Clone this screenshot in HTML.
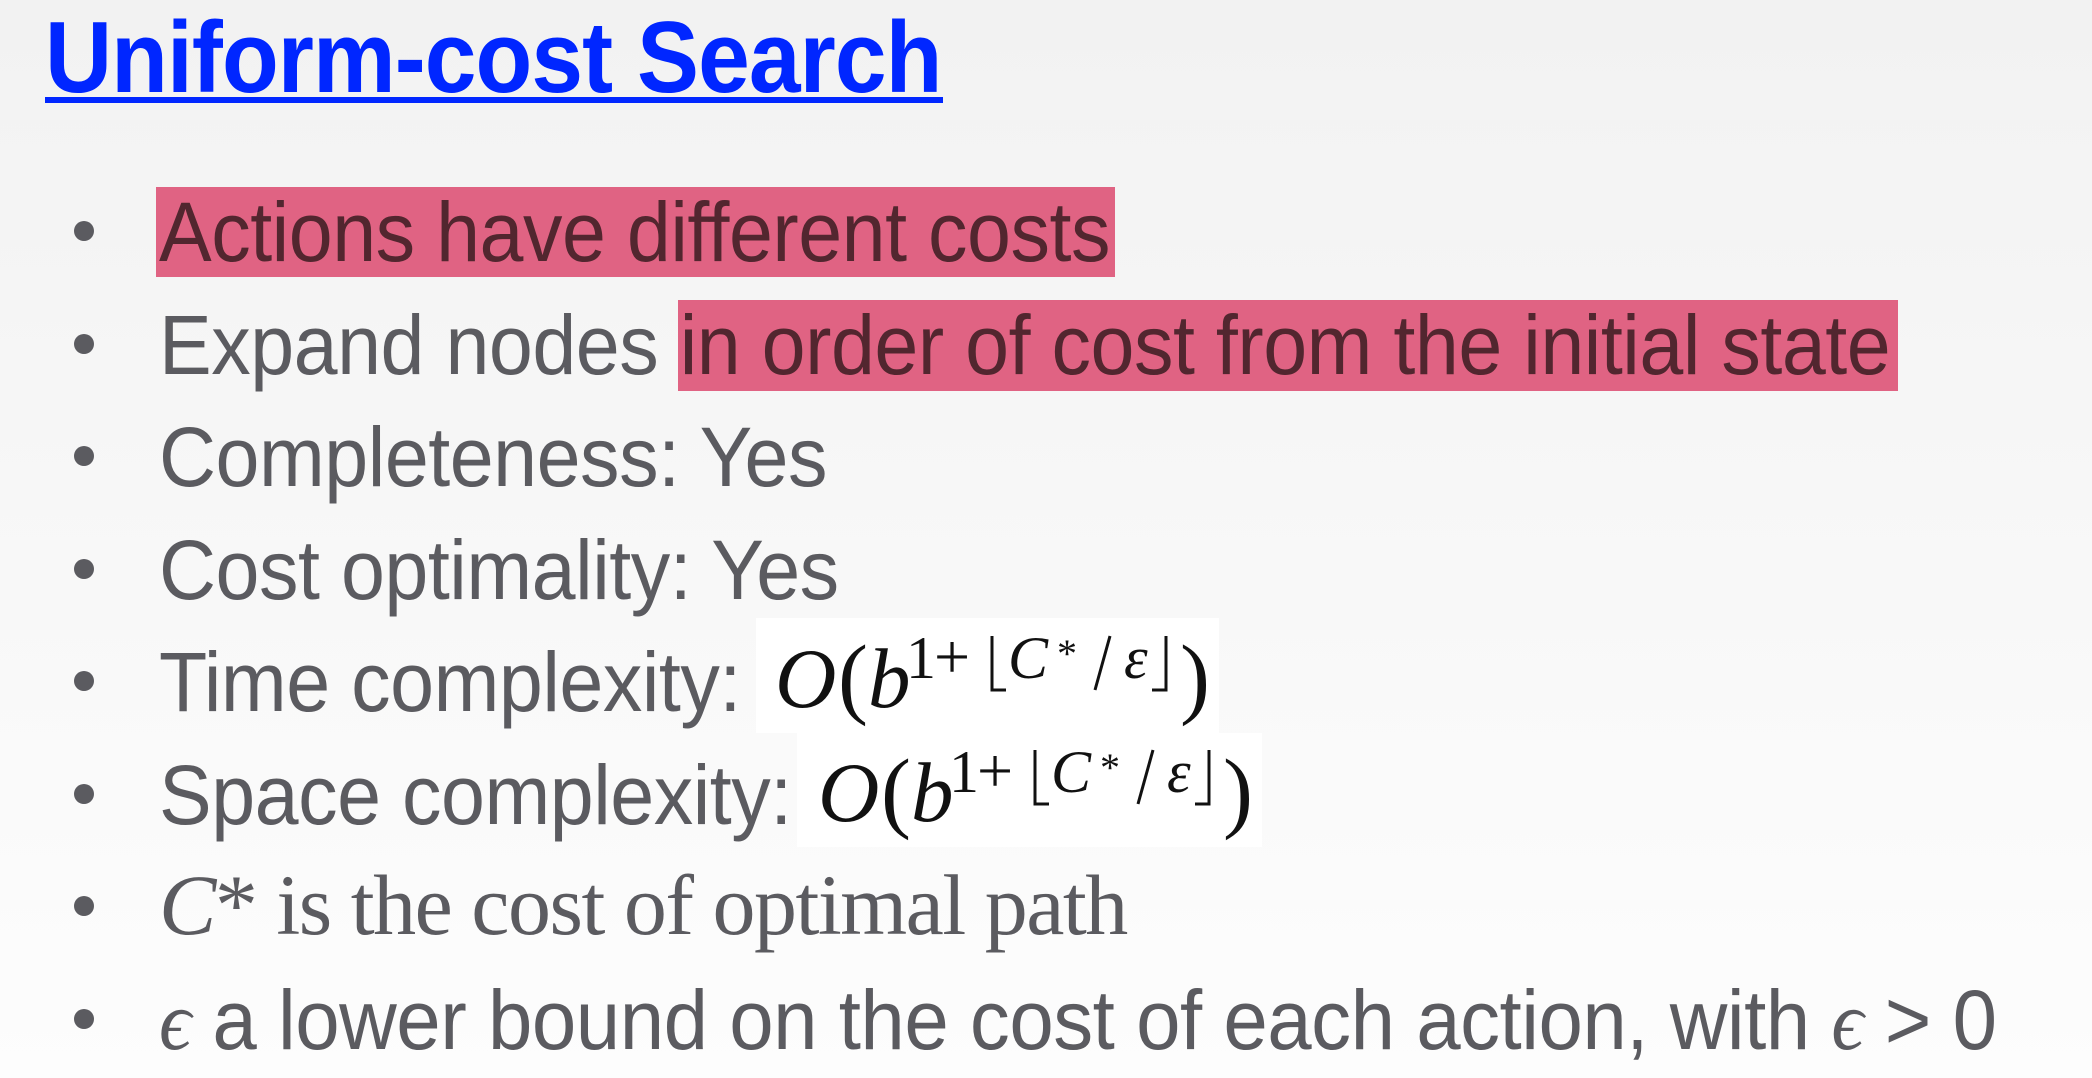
<!DOCTYPE html>
<html><head><meta charset="utf-8"><style>
html,body{margin:0;padding:0}
body{width:2092px;height:1078px;overflow:hidden;position:relative;background:linear-gradient(#f2f2f2,#fdfdfd);font-family:"Liberation Sans",Arial,sans-serif;color:#5b5b60}
.a{position:absolute;white-space:nowrap;line-height:1;transform-origin:0 0}
.t{left:45px;top:8px;font-size:101px;font-weight:bold;color:#0026ff;letter-spacing:-1px;transform:scaleX(0.92)}
.u{position:absolute;left:45px;top:97px;width:898px;height:6px;background:#0026ff}
.b{position:absolute;left:74px;width:20px;height:20px;border-radius:50%;background:#5b5b60}
.l{left:159px;font-size:84px;letter-spacing:-0.5px;transform:scaleX(0.94)}
.hl{position:absolute;background:#e06383}
.dk{color:#52262f}
.box{position:absolute;background:#fff}
.s{font-family:"Liberation Serif",serif;font-size:86px;letter-spacing:-1.5px;transform:none}
</style></head><body>
<div class="a t">Uniform-cost Search</div>
<div class="u"></div>

<div class="hl" style="left:156px;top:187px;width:959px;height:90px"></div>
<div class="hl" style="left:678px;top:300px;width:1220px;height:91px"></div>
<div class="box" style="left:756px;top:618px;width:463px;height:115px"></div>
<div class="box" style="left:797px;top:733px;width:465px;height:114px"></div>

<div class="b" style="top:221px"></div>
<div class="b" style="top:334px"></div>
<div class="b" style="top:446px"></div>
<div class="b" style="top:559px"></div>
<div class="b" style="top:671px"></div>
<div class="b" style="top:784px"></div>
<div class="b" style="top:896px"></div>
<div class="b" style="top:1009px"></div>

<div class="a l dk" style="top:190px">Actions have different costs</div>
<div class="a l" style="top:303px">Expand nodes <span class="dk">in order of cost from the initial state</span></div>
<div class="a l" style="top:415px">Completeness: Yes</div>
<div class="a l" style="top:528px">Cost optimality: Yes</div>
<div class="a l" style="top:640px">Time complexity:</div>
<div class="a l" style="top:753px">Space complexity:</div>
<div class="a l s" style="top:862px"><i>C</i>* is the cost of optimal path</div>
<div class="a l" style="top:978px;transform:scaleX(0.95)"><i style="font-family:'Liberation Serif',serif">ϵ</i> a lower bound on the cost of each action, with <i style="font-family:'Liberation Serif',serif">ϵ</i> &gt; 0</div>

<svg width="2092" height="1078" style="position:absolute;left:0;top:0">
<g font-family="Liberation Serif, serif" fill="#111" stroke="none">
<text x="775" y="707" font-size="85" font-style="italic">O</text>
<text x="838" y="707" font-size="90">(</text>
<text x="868" y="707" font-size="85" font-style="italic">b</text>
<text x="906" y="678" font-size="60">1</text>
<text x="934" y="678" font-size="64">+</text>
<text x="1008" y="678" font-size="60" font-style="italic">C</text>
<text x="1057" y="667" font-size="40">*</text>
<text x="1124" y="678" font-size="60" font-style="italic">ε</text>
<text x="1180" y="707" font-size="90">)</text>
</g>
<g fill="none" stroke="#111" stroke-width="3">
<path d="M992 636V690H1006"/><path d="M1110 636L1095 690"/><path d="M1152 690H1166V636"/>
</g>
<g font-family="Liberation Serif, serif" fill="#111" stroke="none">
<text x="818" y="821" font-size="85" font-style="italic">O</text>
<text x="881" y="821" font-size="90">(</text>
<text x="911" y="821" font-size="85" font-style="italic">b</text>
<text x="949" y="792" font-size="60">1</text>
<text x="977" y="792" font-size="64">+</text>
<text x="1051" y="792" font-size="60" font-style="italic">C</text>
<text x="1100" y="781" font-size="40">*</text>
<text x="1167" y="792" font-size="60" font-style="italic">ε</text>
<text x="1223" y="821" font-size="90">)</text>
</g>
<g fill="none" stroke="#111" stroke-width="3">
<path d="M1035 750V804H1049"/><path d="M1153 750L1138 804"/><path d="M1195 804H1209V750"/>
</g>
</svg>
</body></html>
